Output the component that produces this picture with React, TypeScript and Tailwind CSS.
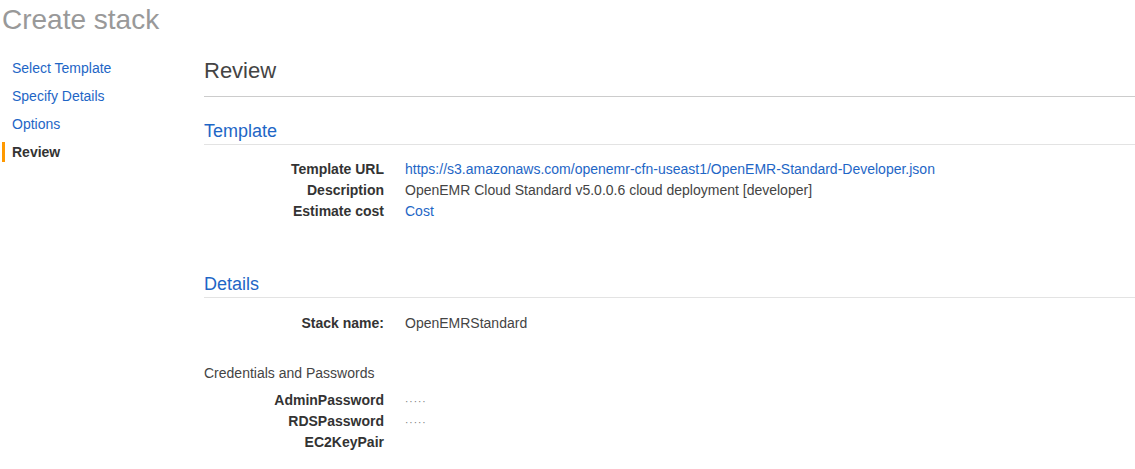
import React from 'react';

const steps = [
  { label: 'Select Template' },
  { label: 'Specify Details' },
  { label: 'Options' },
  { label: 'Review', active: true },
];

type Row = { label: string; value?: string; link?: boolean; masked?: boolean };

function ReviewRows({ rows }: { rows: Row[] }) {
  return (
    <div className="flex flex-col">
      {rows.map((row) => (
        <div key={row.label} className="flex h-[21px] items-center">
          <div className="w-[180px] shrink-0 text-right font-bold text-[#333]">{row.label}</div>
          <div className="pl-[21px]">
            {row.masked ? (
              <span className="text-[10px] tracking-[1px] text-[#777]">·····</span>
            ) : row.link ? (
              <span className="text-[#1e66c6]">{row.value}</span>
            ) : (
              <span className="text-[#444]">{row.value}</span>
            )}
          </div>
        </div>
      ))}
    </div>
  );
}

function SectionHeading({ title }: { title: string }) {
  return (
    <div className="border-b border-[#e3e3e3] pb-[2px]">
      <h3 className="text-[18px] leading-[22px] text-[#1e66c6]">{title}</h3>
    </div>
  );
}

export default function App() {
  return (
    <div className="min-h-[469px] bg-white font-['Liberation_Sans',Arial,sans-serif] text-[14px]">
      <h1 className="pl-[2px] pt-[2px] text-[28px] leading-[36px] text-[#999]">Create stack</h1>

      <div className="flex">
        {/* Left: wizard steps */}
        <nav className="w-[204px] shrink-0 pt-[16px]">
          {steps.map((step) => (
            <div key={step.label} className="flex h-[28px] items-center">
              <div className={`ml-[2px] h-[20px] w-[3px] ${step.active ? 'bg-[#f90]' : ''}`} />
              <span
                className={`pl-[7px] ${
                  step.active ? 'font-bold text-[#333]' : 'text-[#1e66c6]'
                }`}
              >
                {step.label}
              </span>
            </div>
          ))}
        </nav>

        {/* Right: review content */}
        <main className="flex-1 pt-[20px]">
          <div className="border-b border-[#ccc] pb-[12px]">
            <h2 className="text-[22px] leading-[26px] text-[#444]">Review</h2>
          </div>

          <div className="mt-[23px]">
            <SectionHeading title="Template" />
            <div className="mt-[14px]">
              <ReviewRows
                rows={[
                  {
                    label: 'Template URL',
                    value: 'https://s3.amazonaws.com/openemr-cfn-useast1/OpenEMR-Standard-Developer.json',
                    link: true,
                  },
                  { label: 'Description', value: 'OpenEMR Cloud Standard v5.0.0.6 cloud deployment [developer]' },
                  { label: 'Estimate cost', value: 'Cost', link: true },
                ]}
              />
            </div>
          </div>

          <div className="mt-[51px]">
            <SectionHeading title="Details" />
            <div className="mt-[15px]">
              <ReviewRows rows={[{ label: 'Stack name:', value: 'OpenEMRStandard' }]} />
            </div>
          </div>

          <div className="mt-[29px] text-[#444]">Credentials and Passwords</div>
          <div className="mt-[6px]">
            <ReviewRows
              rows={[
                { label: 'AdminPassword', masked: true },
                { label: 'RDSPassword', masked: true },
                { label: 'EC2KeyPair', value: '' },
              ]}
            />
          </div>
        </main>
      </div>
    </div>
  );
}
